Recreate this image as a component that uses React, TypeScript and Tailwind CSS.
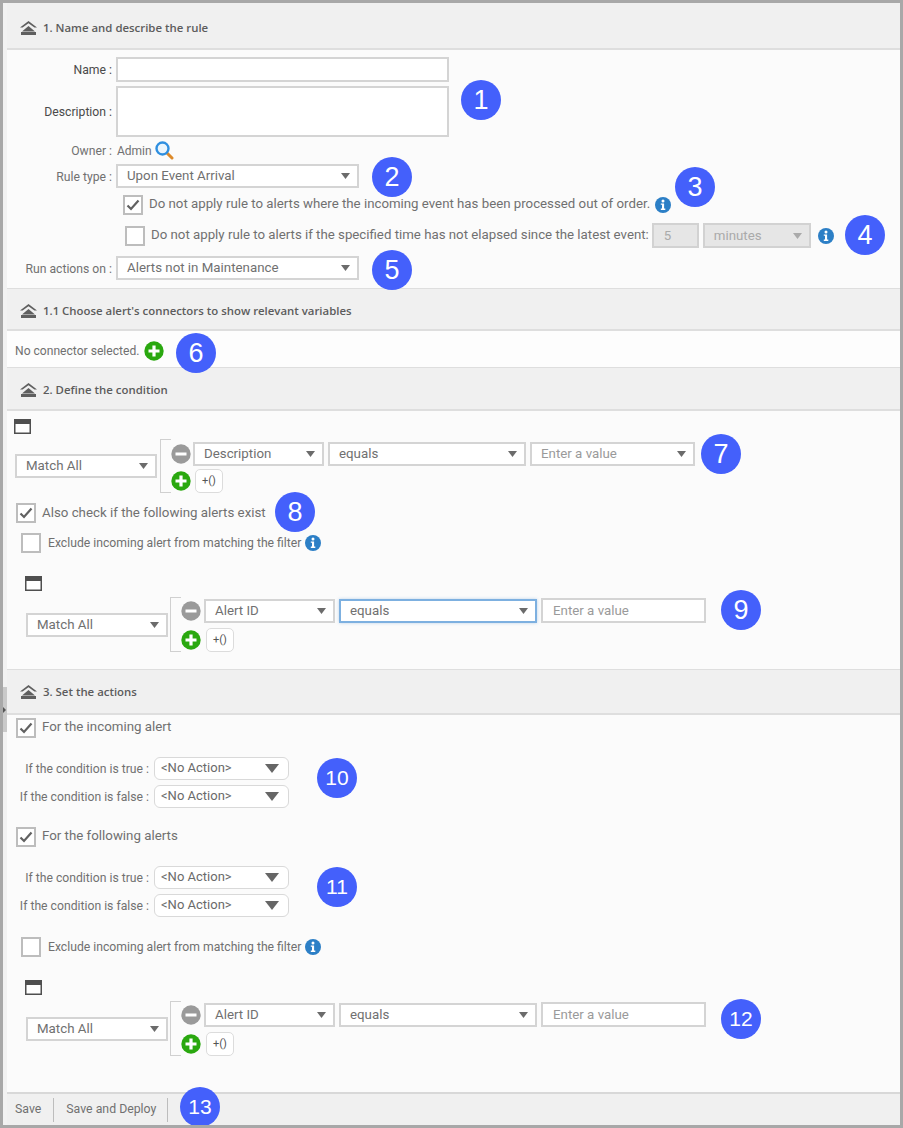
import type { ReactNode } from 'react'

const Caret = ({ big }: { big?: boolean }) => (
  <svg width={big ? 14 : 9} height={big ? 9 : 6} viewBox="0 0 14 9" className="shrink-0">
    <path d="M0 0h14L7 9z" fill={big ? '#666' : '#6b6b6b'} />
  </svg>
)

function Select({ text, className, muted, focus }: { text: string; className: string; muted?: boolean; focus?: boolean }) {
  return (
    <div className={`flex items-center justify-between pl-[9px] pr-[7px] border-2 bg-white text-[13.3px] ${focus ? 'border-[#7db0e0] shadow-[0_0_3px_rgba(125,176,224,0.5)]' : 'border-[#d4d4d4]'} ${muted ? 'text-[#9a9a9a]' : 'text-[#707070]'} ${className}`}>
      <span>{text}</span>
      <Caret />
    </div>
  )
}

const Check = ({ on, className = '' }: { on?: boolean; className?: string }) => (
  <div className={`w-[20px] h-[20px] shrink-0 border-2 border-[#bdbdbd] bg-white flex items-center justify-center ${className}`}>
    {on && (
      <svg width="14" height="12" viewBox="0 0 14 12">
        <path d="M1.5 6.5 5 10 12.5 1.5" fill="none" stroke="#616161" strokeWidth="2.2" />
      </svg>
    )}
  </div>
)

const Info = ({ className = '' }: { className?: string }) => (
  <svg width="16" height="16" viewBox="0 0 16 16" className={`shrink-0 ${className}`}>
    <circle cx="8" cy="8" r="8" fill="#2c7fc6" />
    <circle cx="8" cy="3.9" r="1.5" fill="#fff" />
    <path d="M5.8 6.4h3.3v5.2h1.2v1.4H5.8v-1.4H7V7.8H5.8z" fill="#fff" />
  </svg>
)

const PlusIcon = () => (
  <svg width="20" height="20" viewBox="0 0 20 20" className="shrink-0">
    <circle cx="10" cy="10" r="9.7" fill="#2aa80f" />
    <path d="M8.4 4.5h3.2v3.9h3.9v3.2h-3.9v3.9H8.4v-3.9H4.5V8.4h3.9z" fill="#fff" />
  </svg>
)

const MinusIcon = () => (
  <svg width="20" height="20" viewBox="0 0 20 20" className="shrink-0">
    <circle cx="10" cy="10" r="9.7" fill="#9a9a9a" />
    <rect x="4.5" y="8.5" width="11" height="3" fill="#fff" />
  </svg>
)

const Collapse = () => (
  <svg width="17" height="14" viewBox="0 0 17 14" className="shrink-0">
    <path d="M8.5 0 17 6.6h-2.6L8.5 2.2 2.6 6.6H0z" fill="#5f5f5f" />
    <path d="M8.5 5 15 10.4H2zM1 11h15v3H1z" fill="#5f5f5f" />
  </svg>
)

const WindowIcon = ({ className = '' }: { className?: string }) => (
  <svg width="17" height="15" viewBox="0 0 17 15" className={`block ${className}`}>
    <rect x="0.75" y="0.75" width="15.5" height="13.5" fill="#fff" stroke="#4f4f4f" strokeWidth="1.5" />
    <rect x="0" y="0" width="17" height="5" fill="#4f4f4f" />
  </svg>
)

const SearchIcon = () => (
  <svg width="19" height="19" viewBox="0 0 19 19" className="shrink-0 ml-[3px]">
    <path d="M11.5 11.5 17 17" stroke="#dd8a2a" strokeWidth="3" strokeLinecap="round" />
    <circle cx="7.5" cy="7.5" r="6" fill="#eaf5fd" stroke="#2f8fe0" strokeWidth="2.4" />
  </svg>
)

function Header({ title, className }: { title: string; className: string }) {
  return (
    <div className={`flex items-center gap-[6px] pl-[13px] bg-[#f0f0f0] border-t border-[#dedede] border-b-2 ${className}`}>
      <Collapse />
      <span className="font-['Open_Sans'] font-semibold text-[11.4px] text-[#5c5c5c]">{title}</span>
    </div>
  )
}

const Label = ({ children, className = 'w-[105px]', dark }: { children: ReactNode; className?: string; dark?: boolean }) => (
  <div className={`shrink-0 pt-[2px] text-right text-[12.2px] ${dark ? 'text-[#4a4a4a]' : 'text-[#717171]'} ${className}`}>{children}</div>
)

function Condition({ className, equalsFocus, valueSelect, wide }: { className: string; equalsFocus?: boolean; valueSelect?: boolean; wide?: boolean }) {
  return (
    <div className={`flex items-center ${className}`}>
      <Select text="Match All" className="w-[142px] h-[24px]" />
      <div className={`w-[11px] border border-r-0 border-[#d0d0d0] ${wide ? 'ml-[2px] h-[55px]' : 'ml-[3px] h-[54px]'}`} />
      <div className={`flex flex-col self-end ${wide ? 'gap-[5px]' : 'gap-[3px]'}`}>
        <div className="flex items-center">
          <MinusIcon />
          <Select text={wide ? 'Alert ID' : 'Description'} className={`h-[24px] w-[131px] ${wide ? 'ml-[3px]' : 'ml-[2px]'}`} />
          <Select text="equals" focus={equalsFocus} className="h-[24px] ml-[4px] w-[198px]" />
          {valueSelect ? (
            <Select text="Enter a value" muted className="h-[24px] w-[165px] ml-[4px]" />
          ) : (
            <div className="h-[25px] w-[165px] ml-[4px] pl-[10px] border-2 border-[#d4d4d4] bg-white text-[13.3px] text-[#9a9a9a] flex items-center">Enter a value</div>
          )}
        </div>
        <div className="flex items-center">
          <PlusIcon />
          <div className={`h-[24px] w-[28px] border border-[#dcdcdc] rounded-[5px] bg-white text-[11px] text-[#555] flex items-center justify-center ${wide ? 'ml-[5px]' : 'ml-[4px]'}`}>+()</div>
        </div>
      </div>
    </div>
  )
}

function ActionRows({ className }: { className: string }) {
  return (
    <div className={`flex flex-col gap-[5px] ${className}`}>
      {['If the condition is true :', 'If the condition is false :'].map(t => (
        <div key={t} className="flex items-center">
          <Label className="w-[142px]">{t}</Label>
          <div className="ml-[5px] w-[135px] h-[23px] pl-[6px] pr-[9px] border border-[#d9d9d9] rounded-[6px] bg-white flex items-center justify-between text-[#6a6a6a]">
            <span className="-mt-[1px]">&lt;No Action&gt;</span>
            <Caret big />
          </div>
        </div>
      ))}
    </div>
  )
}

const Badge = ({ n, className }: { n: number; className: string }) => (
  <div className={`absolute w-[40px] h-[40px] rounded-full bg-[#4460fb] text-white flex items-center justify-center font-['Liberation_Sans'] ${n > 9 ? 'text-[21px]' : 'text-[27px]'} ${className}`}>{n}</div>
)

export default function App() {
  return (
    <div className="relative w-[903px] h-[1128px] overflow-hidden border-[3px] border-[#a8a8a8] bg-[#f2f2f2] pl-[4px] font-['Roboto'] text-[13px] text-[#707070]">
      <div className="flex flex-col h-full bg-[#fbfbfb]">
        <Header title="1. Name and describe the rule" className="h-[47px] pt-[4px] border-t-0" />

        <div className="h-[238px] flex flex-col">
          <div className="flex items-center mt-[7px]">
            <Label dark>Name :</Label>
            <div className="ml-[4px] w-[333px] h-[25px] border-2 border-[#d4d4d4] bg-white" />
          </div>
          <div className="flex items-center mt-[4px]">
            <Label dark>Description :</Label>
            <div className="ml-[4px] w-[333px] h-[51px] border-2 border-[#d4d4d4] bg-white" />
          </div>
          <div className="flex items-center mt-[4px] h-[19px]">
            <Label>Owner :</Label>
            <span className="ml-[5px] text-[12px]">Admin</span>
            <SearchIcon />
          </div>
          <div className="flex items-center mt-[4px]">
            <Label>Rule type :</Label>
            <Select text="Upon Event Arrival" className="ml-[4px] w-[243px] h-[24px]" />
          </div>
          <div className="flex items-center mt-[7px] ml-[116px]">
            <Check on />
            <span className="ml-[6px] -mt-[2px] text-[13.25px] whitespace-nowrap">Do not apply rule to alerts where the incoming event has been processed out of order.</span>
            <Info className="ml-[5px]" />
          </div>
          <div className="flex items-center mt-[8px] ml-[118px]">
            <Check />
            <span className="ml-[6px] -mt-[2px] text-[13.25px] whitespace-nowrap">Do not apply rule to alerts if the specified time has not elapsed since the latest event:</span>
            <div className="ml-[3px] w-[47px] h-[25px] border-2 border-[#d2d2d2] bg-[#e6e6e6] text-[#aaa] text-[13.3px] flex items-center pl-[10px]">5</div>
            <div className="ml-[4px] w-[108px] h-[25px] border-2 border-[#d2d2d2] bg-[#e6e6e6] text-[#aaa] text-[13.3px] flex items-center justify-between pl-[9px] pr-[7px]">
              <span>minutes</span>
              <svg width="9" height="6" viewBox="0 0 14 9"><path d="M0 0h14L7 9z" fill="#aaa" /></svg>
            </div>
            <Info className="ml-[7px]" />
          </div>
          <div className="flex items-center mt-[8px]">
            <Label>Run actions on :</Label>
            <Select text="Alerts not in Maintenance" className="ml-[4px] w-[243px] h-[24px]" />
          </div>
        </div>

        <Header title="1.1 Choose alert's connectors to show relevant variables" className="h-[43px] pt-[4px]" />
        <div className="h-[36px] flex items-center pl-[8px] pt-[4px] gap-[5px] bg-[#fdfdfd] text-[12.1px]">
          <span>No connector selected.</span>
          <PlusIcon />
        </div>

        <Header title="2. Define the condition" className="h-[44px] pt-[2px]" />
        <div className="h-[258px] flex flex-col">
          <WindowIcon className="ml-[7px] mt-[8px]" />
          <Condition className="ml-[8px] mt-[5px]" valueSelect />
          <div className="flex items-center ml-[9px] mt-[10px]">
            <Check on />
            <span className="ml-[6px] text-[13.3px] -mt-[1px]">Also check if the following alerts exist</span>
          </div>
          <div className="flex items-center ml-[14px] mt-[10px]">
            <Check />
            <span className="ml-[7px] text-[12.2px]">Exclude incoming alert from matching the filter</span>
            <Info className="ml-[4px]" />
          </div>
          <WindowIcon className="ml-[18px] mt-[23px]" />
          <Condition className="ml-[19px] mt-[6px]" equalsFocus wide />
        </div>

        <Header title="3. Set the actions" className="h-[46px]" />
        <div className="flex-1 flex flex-col">
          <div className="flex items-center ml-[9px] mt-[3px]">
            <Check on />
            <span className="ml-[6px] text-[13.3px] -mt-[2px]">For the incoming alert</span>
          </div>
          <ActionRows className="mt-[19px]" />
          <div className="flex items-center ml-[9px] mt-[19px]">
            <Check on />
            <span className="ml-[6px] text-[13.3px] -mt-[2px]">For the following alerts</span>
          </div>
          <ActionRows className="mt-[19px]" />
          <div className="flex items-center ml-[14px] mt-[20px]">
            <Check />
            <span className="ml-[7px] text-[12.2px]">Exclude incoming alert from matching the filter</span>
            <Info className="ml-[4px]" />
          </div>
          <WindowIcon className="ml-[18px] mt-[23px]" />
          <Condition className="ml-[19px] mt-[6px]" wide />
        </div>

        <div className="h-[33px] shrink-0 flex items-center bg-[#f0f0f0] border-t-2 border-[#d8d8d8] pl-[8px] text-[12.3px]">
          <span>Save</span>
          <div className="w-px h-[24px] bg-[#bdbdbd] ml-[12px]" />
          <span className="ml-[12px]">Save and Deploy</span>
          <div className="w-px h-[24px] bg-[#bdbdbd] ml-[11px]" />
        </div>
      </div>

      <div className="absolute left-0 top-[684px] w-[4px] h-[45px] bg-[#c9c9c9] flex items-center">
        <div className="w-0 h-0 border-y-[3px] border-y-transparent border-l-[3px] border-l-[#555]" />
      </div>

      <Badge n={1} className="left-[458px] top-[77px]" />
      <Badge n={2} className="left-[369px] top-[154px]" />
      <Badge n={3} className="left-[672px] top-[164px]" />
      <Badge n={4} className="left-[842px] top-[212px]" />
      <Badge n={5} className="left-[369px] top-[247px]" />
      <Badge n={6} className="left-[173px] top-[330px]" />
      <Badge n={7} className="left-[698px] top-[431px]" />
      <Badge n={8} className="left-[272px] top-[489px]" />
      <Badge n={9} className="left-[718px] top-[587px]" />
      <Badge n={10} className="left-[314px] top-[755px]" />
      <Badge n={11} className="left-[314px] top-[864px]" />
      <Badge n={12} className="left-[718px] top-[996px]" />
      <Badge n={13} className="left-[177px] top-[1084px]" />
    </div>
  )
}
